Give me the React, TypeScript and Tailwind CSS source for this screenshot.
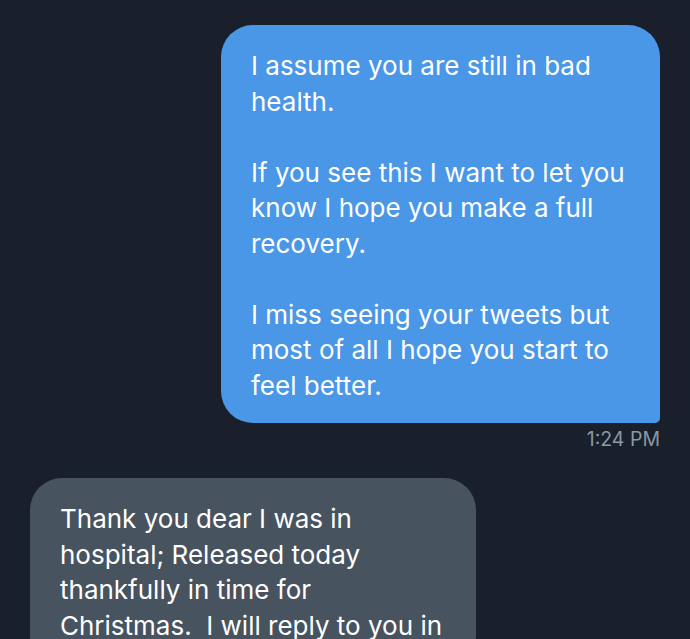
import React from 'react';

const sent = [
  'I assume you are still in bad',
  'health.',
  '',
  'If you see this I want to let you',
  'know I hope you make a full',
  'recovery.',
  '',
  'I miss seeing your tweets but',
  'most of all I hope you start to',
  'feel better.',
];

const received = [
  'Thank you dear I was in',
  'hospital; Released today',
  'thankfully in time for',
  'Christmas.  I will reply to you in',
];

const Lines: React.FC<{ lines: string[] }> = ({ lines }) => (
  <>
    {lines.map((l, i) => (
      <div key={i} className="whitespace-pre h-[35.5px] leading-[35.5px]">
        {l}
      </div>
    ))}
  </>
);

export default function App() {
  return (
    <div
      className="h-screen bg-[#19202b] px-[30px] pt-[25px] overflow-hidden"
      style={{ fontFamily: 'Inter, "Noto Sans", sans-serif' }}
    >
      <div className="flex flex-col items-end">
        <div className="w-[439px] bg-[#4a97e8] text-white text-[26px] rounded-[32px] rounded-br-[5px] pl-[30px] pr-4 pt-[23px] pb-[20px]">
          <Lines lines={sent} />
        </div>
        <div className="mt-[5px] text-[19.5px] leading-[22px] text-[#8b98a5]">1:24 PM</div>
      </div>

      <div className="mt-[28px] w-[446px] bg-[#47535f] text-white text-[26px] rounded-[32px] rounded-bl-[5px] pl-[30px] pr-4 pt-[23px] pb-[24px]">
        <Lines lines={received} />
      </div>
    </div>
  );
}
